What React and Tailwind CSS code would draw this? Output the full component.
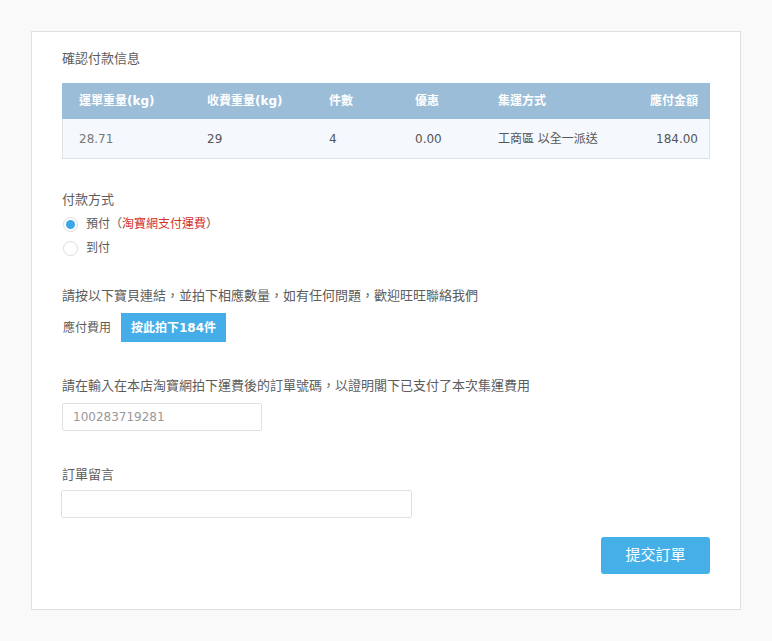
import React from 'react';

const font = { fontFamily: '"DejaVu Sans", "Noto Sans CJK TC", sans-serif' };

const columns = [
  { label: '運單重量(kg)', value: '28.71', width: 'w-[128px]' },
  { label: '收費重量(kg)', value: '29', width: 'w-[122px]' },
  { label: '件數', value: '4', width: 'w-[86px]' },
  { label: '優惠', value: '0.00', width: 'w-[83px]' },
  { label: '集運方式', value: '工商區 以全一派送', width: 'w-[130px]' },
];

function PaymentTable() {
  return (
    <div className="mt-[14px] w-[648px]">
      {/* header */}
      <div className="flex h-[36px] items-center bg-[#9bbdd8] text-[12px] font-bold text-white">
        {columns.map((c) => (
          <div key={c.label} className={`${c.width} pl-[17px]`}>{c.label}</div>
        ))}
        <div className="flex-1 pr-[12px] text-right">應付金額</div>
      </div>
      {/* body */}
      <div className="flex h-[40px] items-center border border-t-0 border-[#dde2e6] bg-[#f5f9fd] text-[12px] text-[#555]">
        {columns.map((c, i) => (
          <div
            key={c.label}
            className={i === 0 ? 'w-[127px] pl-[16px] text-[#777]' : `${c.width} pl-[17px]`}
          >
            {c.value}
          </div>
        ))}
        <div className="flex-1 pr-[11px] text-right">184.00</div>
      </div>
    </div>
  );
}

export default function App() {
  return (
    <div className="min-h-[641px] bg-[#f9f9f9] px-[31px] pt-[31px]" style={font}>
      <div className="w-[710px] border border-[#e0e0e0] bg-white pl-[30px] pr-[30px] pt-[17px] pb-[35px] text-[#5c5c5c]">
        <div className="text-[13px] leading-[20px]">確認付款信息</div>
        <PaymentTable />

        {/* 付款方式 */}
        <div className="mt-[31px] text-[13px] leading-[20px]">付款方式</div>
        <div className="mt-[4px] flex h-[20px] items-center text-[12px]">
          <span className="ml-[1px] mr-[8px] flex h-[15px] w-[15px] items-center justify-center rounded-full border border-[#dcdcdc] bg-white">
            <span className="h-[9px] w-[9px] rounded-full bg-[#3ba7e6]" />
          </span>
          <span>預付（<span className="text-[#d2322d]">淘寶網支付運費</span>）</span>
        </div>
        <div className="mt-[4px] flex h-[20px] items-center text-[12px]">
          <span className="ml-[1px] mr-[8px] h-[15px] w-[15px] rounded-full border border-[#dcdcdc] bg-white" />
          <span>到付</span>
        </div>

        {/* link */}
        <div className="mt-[28px] text-[13px] leading-[20px]">請按以下寶貝連結，並拍下相應數量，如有任何問題，歡迎旺旺聯絡我們</div>
        <div className="mt-[7px] flex items-center text-[12px]">
          <span className="ml-[1px] w-[58px]">應付費用</span>
          <button className="h-[29px] w-[105px] bg-[#45aee8] text-[12px] font-bold text-white">按此拍下184件</button>
        </div>

        {/* order no */}
        <div className="mt-[34px] text-[13px] leading-[20px]">請在輸入在本店淘寶網拍下運費後的訂單號碼，以證明閣下已支付了本次集運費用</div>
        <input
          className="mt-[7px] block h-[28px] w-[200px] rounded-[2px] border border-[#e0e0e0] px-[10px] text-[12px] text-[#999] outline-none"
          style={font}
          defaultValue="100283719281"
        />

        {/* remark */}
        <div className="mt-[34px] text-[13px] leading-[20px]">訂單留言</div>
        <input
          className="mt-[5px] -ml-[1px] block h-[28px] w-[351px] rounded-[2px] border border-[#e0e0e0] px-[10px] text-[12px] outline-none"
          style={font}
        />

        <div className="mt-[19px] flex justify-end">
          <button className="h-[37px] w-[109px] rounded-[3px] bg-[#45b0e8] text-[15px] text-white">提交訂單</button>
        </div>
      </div>
    </div>
  );
}
